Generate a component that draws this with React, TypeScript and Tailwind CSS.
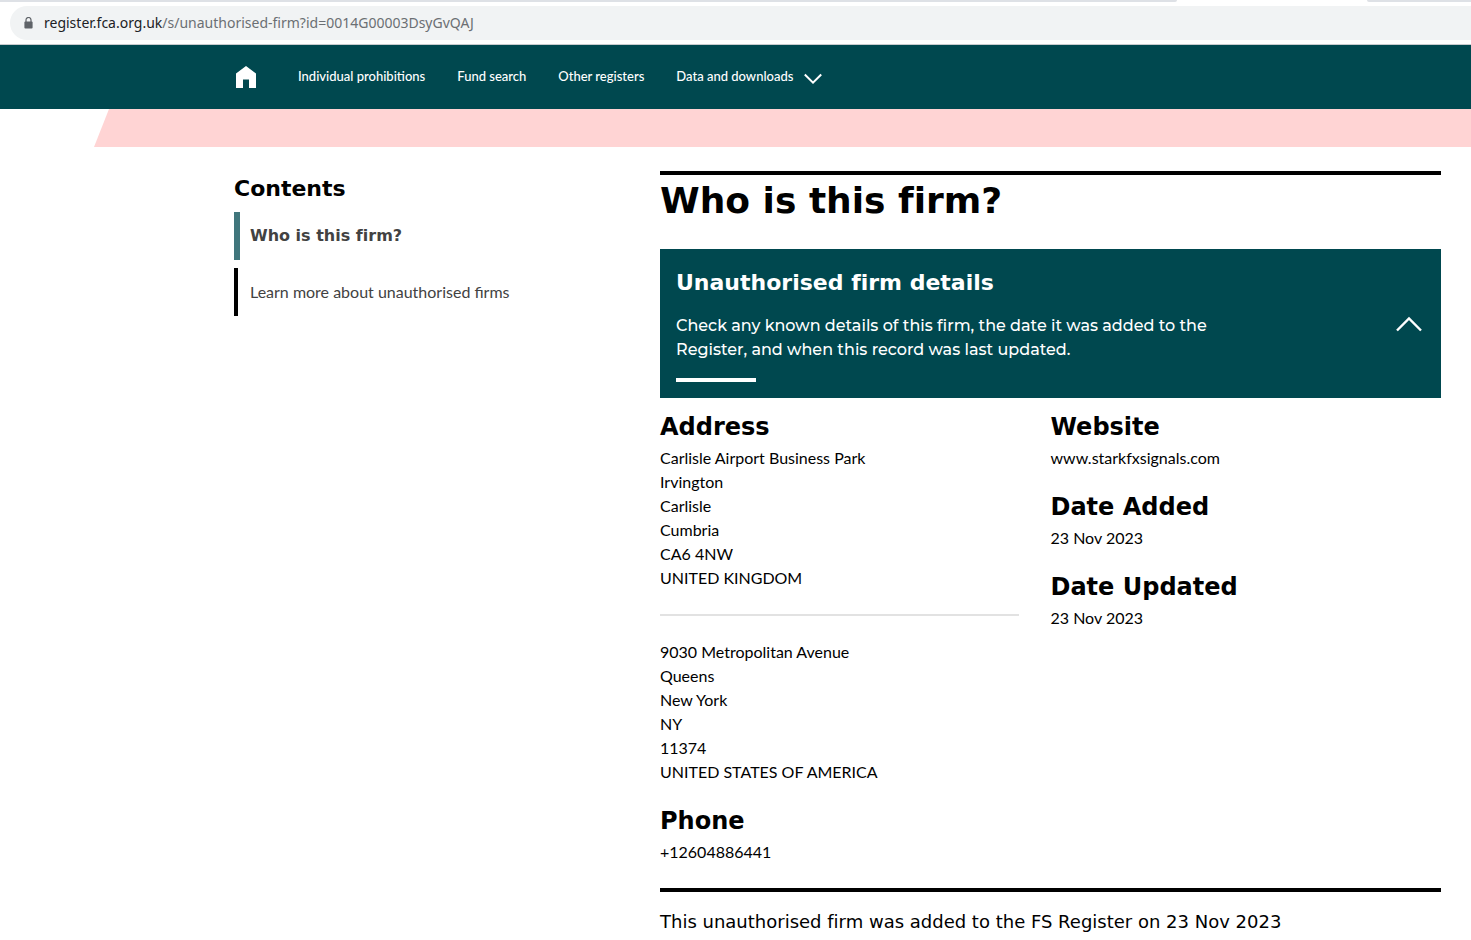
import { useState } from "react";
import type { ReactNode } from "react";

const navLinks = ["Individual prohibitions", "Fund search", "Other registers"];

const addresses = [
  [
    "Carlisle Airport Business Park",
    "Irvington",
    "Carlisle",
    "Cumbria",
    "CA6 4NW",
    "UNITED KINGDOM",
  ],
  [
    "9030 Metropolitan Avenue",
    "Queens",
    "New York",
    "NY",
    "11374",
    "UNITED STATES OF AMERICA",
  ],
];

const headingFont =
  "font-['DejaVu_Sans',sans-serif] [font-variant-ligatures:none]";

function AddressBar() {
  return (
    <div className="border-b border-[#c8cbce] bg-white">
      <div className="flex h-[2px] justify-between">
        <div className="w-4/5 rounded-br-sm bg-[#dee1e6]" />
        <div className="w-[104px] rounded-bl-sm bg-[#dee1e6]" />
      </div>
      <div className="mt-1 mb-1 ml-[10px] flex h-[34px] items-center gap-[11px] rounded-l-full bg-[#f1f3f4] pl-[14px]">
        <svg width="9" height="12" viewBox="0 0 9 12" fill="none" aria-hidden="true">
          <path d="M2 5V3a2.4 2.4 0 0 1 5 0v2" stroke="#5f6368" strokeWidth="1.2" />
          <rect x="0.4" y="4.5" width="8.2" height="7" rx="1" fill="#5f6368" />
        </svg>
        <div className="font-['Noto_Sans',sans-serif] text-[14px] leading-5 whitespace-nowrap text-[#6b6f73]">
          <span className="text-[#202124]">register.fca.org.uk</span>
          /s/unauthorised-firm?id=0014G00003DsyGvQAJ
        </div>
      </div>
    </div>
  );
}

function Header() {
  return (
    <header className="bg-[#00484f] pl-[235px]">
      <nav className="flex h-16 items-center gap-8 pb-0.5 text-[13px] leading-5 font-medium text-white">
        <a href="#home" aria-label="Home" className="mt-0.5 mr-[10px]">
          <svg width="21" height="22" viewBox="0 0 21 22" fill="#fff" aria-hidden="true">
            <path d="M11 0 1 7.5V22H8V13.5H14V22H21V7.5Z" />
          </svg>
        </a>
        {navLinks.map((label) => (
          <a key={label} href="#nav">
            {label}
          </a>
        ))}
        <button type="button" className="flex items-center gap-[11px]">
          Data and downloads
          <svg width="18" height="12" viewBox="0 0 18 12" fill="none" aria-hidden="true" className="mt-1.5">
            <path d="M0.8 1.5 9 9.7 17.2 1.5" stroke="#fff" strokeWidth="2" />
          </svg>
        </button>
      </nav>
    </header>
  );
}

function Sidebar() {
  return (
    <aside className="w-[426px] shrink-0">
      <h2 className={`${headingFont} text-[22px] leading-9 font-bold`}>
        Contents
      </h2>
      <ul className="mt-[5px] space-y-2 text-base text-[#424242]">
        <li>
          <a
            href="#who"
            className={`${headingFont} flex h-12 items-center border-l-6 border-[#40767c] pl-[10px] font-bold`}>
            Who is this firm?
          </a>
        </li>
        <li>
          <a
            href="#learn"
            className="flex h-12 items-center border-l-4 border-black pl-3">
            Learn more about unauthorised firms
          </a>
        </li>
      </ul>
    </aside>
  );
}

function Detail({ title, children }: { title: string; children: ReactNode }) {
  return (
    <section className="mb-5">
      <h3 className={`${headingFont} mb-0.5 text-2xl leading-[34px] font-bold`}>
        {title}
      </h3>
      {children}
    </section>
  );
}

export default function App() {
  const [open, setOpen] = useState(true);

  return (
    <div className="bg-white font-[Lato,sans-serif] text-base leading-6 text-black">
      <AddressBar />
      <Header />
      <div className="ml-[94px] h-[38px] bg-[#ffd4d4] [clip-path:polygon(15px_0,100%_0,100%_100%,0_100%)]" />

      <div className="flex pt-6 pr-[30px] pl-[234px]">
        <Sidebar />
        <main id="who" className="min-w-0 flex-1">
          <h1
            className={`${headingFont} border-t-4 border-black pt-1 text-4xl leading-[44px] font-bold`}>
            Who is this firm?
          </h1>

          <button
            type="button"
            aria-expanded={open}
            onClick={() => setOpen(!open)}
            className="mt-[26px] flex w-full items-center justify-between bg-[#00484f] p-4 text-left text-white">
            <span className="block">
              <span className={`${headingFont} block text-[22px] leading-9 font-bold`}>
                Unauthorised firm details
              </span>
              <span className="mt-[13px] block max-w-[560px] font-[Montserrat,Inter,sans-serif] text-base leading-6 font-medium">
                Check any known details of this firm, the date it was added to the
                Register, and when this record was last updated.
              </span>
              <span className="mt-4 block h-1 w-20 bg-white" />
            </span>
            <svg
              width="26"
              height="16"
              viewBox="0 0 26 16"
              fill="none"
              aria-hidden="true"
              className={open ? "mr-[3px]" : "mr-[3px] rotate-180"}>
              <path d="M1 14.5 13 2.5 25 14.5" stroke="#fff" strokeWidth="2.4" />
            </svg>
          </button>

          {open && (
            <div className="grid grid-cols-2 border-b-4 border-black pt-3 pb-1">
              <div className="pr-8">
                <Detail title="Address">
                  <div className="divide-y-2 divide-[#e2e2e2]">
                    {addresses.map((lines, index) => (
                      <address
                        key={index}
                        className="py-6 not-italic first:pt-0 last:pb-0">
                        {lines.map((line) => (
                          <div key={line}>{line}</div>
                        ))}
                      </address>
                    ))}
                  </div>
                </Detail>
                <Detail title="Phone">+12604886441</Detail>
              </div>
              <div>
                <Detail title="Website">www.starkfxsignals.com</Detail>
                <Detail title="Date Added">23 Nov 2023</Detail>
                <Detail title="Date Updated">23 Nov 2023</Detail>
              </div>
            </div>
          )}

          <p className={`${headingFont} pt-4 text-lg leading-7`}>
            This unauthorised firm was added to the FS Register on 23 Nov 2023
          </p>
        </main>
      </div>
    </div>
  );
}
